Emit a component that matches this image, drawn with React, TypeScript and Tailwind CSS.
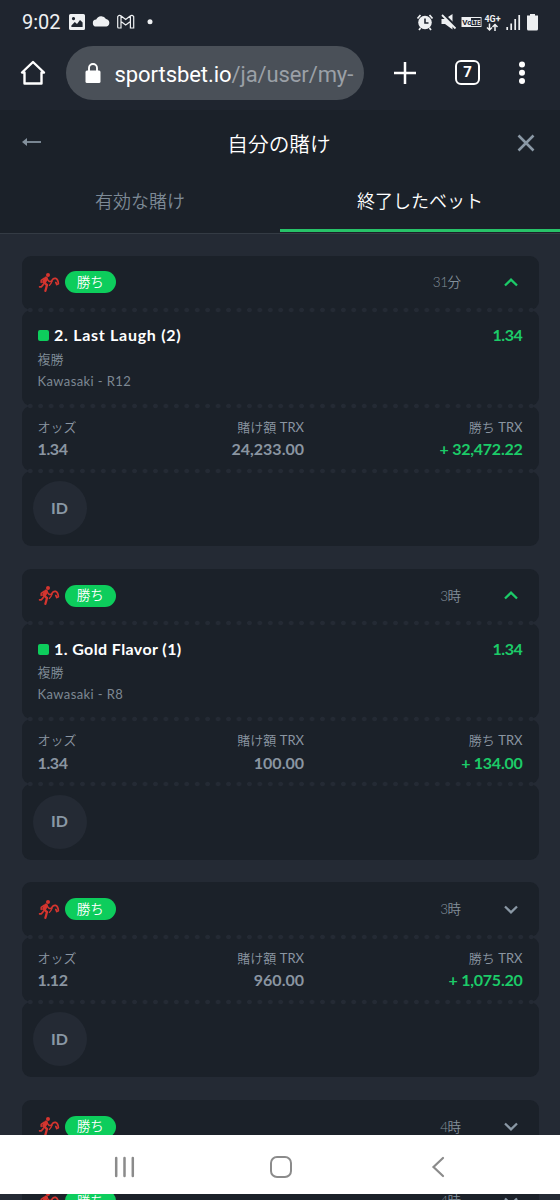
import clsx from "clsx";

type Bet = {
  time: string;
  open?: boolean;
  selection?: { name: string; market: string; event: string; price: string };
  odds?: string;
  stake?: string;
  win?: string;
};

const bets: Bet[] = [
  {
    time: "31分",
    open: true,
    selection: {
      name: "2. Last Laugh (2)",
      market: "複勝",
      event: "Kawasaki - R12",
      price: "1.34",
    },
    odds: "1.34",
    stake: "24,233.00",
    win: "+ 32,472.22",
  },
  {
    time: "3時",
    open: true,
    selection: {
      name: "1. Gold Flavor (1)",
      market: "複勝",
      event: "Kawasaki - R8",
      price: "1.34",
    },
    odds: "1.34",
    stake: "100.00",
    win: "+ 134.00",
  },
  { time: "3時", odds: "1.12", stake: "960.00", win: "+ 1,075.20" },
  { time: "4時" },
];

const RacingIcon = () => (
  <svg
    width="22"
    height="22"
    viewBox="0 0 22 22"
    fill="none"
    stroke="#d5352f"
    strokeLinecap="round"
    strokeLinejoin="round"
  >
    <circle cx="10" cy="3" r="2" fill="#d5352f" stroke="none" />
    <path d="M8 6.600 6.200 10" strokeWidth="4" />
    <path d="M6.600 11.200 9 13l-.8 3-.8 2.800" strokeWidth="2.300" />
    <path d="M6 6.400 3.200 8.400v2M9.400 7.400l1.800 2 2.600-.2" strokeWidth="1.500" />
    <path d="M1.600 14.800h1.800l1.800-2.200" strokeWidth="1.700" />
    <path d="M13.400 10.200c.4-2.600 2.200-4.200 4.200-3.800 1.800.6 2.600 2.800 2.800 5.400l-1.600.8-1-2.200" strokeWidth="1.700" />
    <path d="m13.200 11.200-1.800 2.200" strokeWidth="1.300" />
  </svg>
);

const Chevron = ({ open }: { open?: boolean }) => (
  <svg
    width="14"
    height="10"
    viewBox="0 0 14 10"
    fill="none"
    stroke={open ? "#1ccb68" : "#8a98a5"}
    strokeWidth="2.300"
  >
    <path d={open ? "M1 7.500 7 1.700 13 7.500" : "M1 1.500 7 7.300 13 1.500"} />
  </svg>
);

const Perforation = () => (
  <div className="relative z-10 -my-[3px] ml-[3px] mr-[3px] h-[6px] bg-[radial-gradient(circle,#242a34_1.9px,transparent_2.6px)] bg-size-[10.44px_6px]" />
);

const BetHeader = ({ time, open }: { time: string; open?: boolean }) => (
  <div className="flex h-[54.2px] items-center rounded-[9px] bg-[#1b2129] pr-[21px] pl-4">
    <RacingIcon />
    <span className="-mt-px ml-[5.5px] flex h-[22px] w-[50.5px] items-center justify-center rounded-full bg-[#0dcd5c] pt-px text-[13.5px] leading-none font-[350] text-white">
      勝ち
    </span>
    <span className="ml-auto text-[13.5px] font-[350] tracking-[-0.5px] text-[#83909b]">
      {time}
    </span>
    <span className="ml-[43px]">
      <Chevron open={open} />
    </span>
  </div>
);

const BetCard = ({ time, open, selection, odds, stake, win }: Bet) => (
  <article>
    <BetHeader time={time} open={open} />
    {selection && (
      <>
        <Perforation />
        <div className="h-[96px] rounded-[9px] bg-[#1b2129] px-4 pt-[14px]">
          <div className="flex h-[24px] items-center text-[16px] font-bold">
            <span className="mr-[5.5px] size-[11px] rounded-[2px] bg-[#0dcd5c]" />
            <span
              className={clsx(
                "-mt-px text-white",
                selection.name.startsWith("2") ? "tracking-[0.72px]" : "tracking-[0.4px]",
              )}
            >
              {selection.name}
            </span>
            <span className="-mt-px ml-auto tracking-[-0.4px] text-[#1ccb68]">{selection.price}</span>
          </div>
          <div className="text-[13px] leading-[22px] text-[#7d8893]">
            <p className="font-[350] text-[#83909b]">{selection.market}</p>
            <p className="tracking-[0.4px]">{selection.event}</p>
          </div>
        </div>
      </>
    )}
    {odds && (
      <>
        <Perforation />
        <div className="grid h-[65.3px] grid-cols-[89px_177.5px_1fr] rounded-[9px] bg-[#1b2129] px-4 pt-[11px] text-[13px] leading-[21.6px] text-[#8a95a1]">
          <div>
            <p className="font-[350]">オッズ</p>
            <p className="text-[16px] font-bold tracking-[-0.4px]">{odds}</p>
          </div>
          <div className="text-right">
            <p className="font-[350]">
              賭け額 <span className="font-normal">TRX</span>
            </p>
            <p className="text-[16px] font-bold">{stake}</p>
          </div>
          <div className="text-right">
            <p className="font-[350]">
              勝ち <span className="font-normal">TRX</span>
            </p>
            <p className="text-[16px] font-bold tracking-[-0.25px] text-[#1ccb68]">{win}</p>
          </div>
        </div>
      </>
    )}
    <Perforation />
    <div className="flex h-[75.5px] items-center rounded-[9px] bg-[#1b2129] pl-[11px]">
      <button className="-mt-px size-[54px] rounded-full bg-[#242a34] pb-px text-[16px] font-bold text-[#8a98a5]">
        ID
      </button>
    </div>
  </article>
);

const StatusBar = () => (
  <div className="flex h-[43px] items-center pl-[22px] font-[Roboto] text-[#eef0f2]">
    <span className="w-[46px] text-[20px]">9:02</span>
    <svg width="90" height="20" viewBox="68 11 90 20">
      <path
        d="M70.500 13h13q1.500 0 1.500 1.500v13q0 1.500-1.500 1.500h-13q-1.500 0-1.500-1.500v-13q0-1.500 1.500-1.500Zm.9 13h11.200V21.600l-2.600-2.600-3 4-2.200-2-3.400 3.400ZM73.500 16a1.600 1.600 0 1 0 .01 0Z"
        fill="currentColor"
        fillRule="evenodd"
      />
      <path d="M96.500 25.500a3.500 3.500 0 0 1-.3-7 5.500 5.500 0 0 1 9.800-.6 3.900 3.900 0 0 1 .5 7.600Z" fill="currentColor" />
      <path
        d="M118 27h3v-6.500l4.700 3.600 4.700-3.600V27h3.300V15.700q-1.500-2.200-3.500-.7l-4.500 3.500-4.500-3.500q-2-1.500-3.500.7V26q0 1 1 1ZM121 20.500V15M130.400 20.500V15"
        fill="none"
        stroke="currentColor"
        strokeWidth="1.200"
      />
      <circle cx="150" cy="20.700" r="2.500" fill="currentColor" />
    </svg>
    <svg className="ml-[256px]" width="130" height="24" viewBox="414 9 130 24" fill="none" stroke="currentColor">
      <circle cx="425" cy="21.500" r="6.800" fill="currentColor" stroke="none" />
      <path d="M417.500 17.500l3-3.500M432.500 17.500l-3-3.500M420.500 27l-1.500 2M429.500 27l1.500 2" strokeWidth="1.700" />
      <path d="M425 17.500v4.500h3.500" stroke="#1f252f" strokeWidth="1.600" />
      <path d="M441.500 18h3.500l7.500-5v15.500l-7.500-5.500h-3.500Z" fill="currentColor" stroke="none" />
      <path d="m442.500 12.500 14 14" stroke="#1f252f" strokeWidth="3" />
      <path d="m442 14 13.500 13.500" strokeWidth="1.800" />
      <rect x="461.500" y="16" width="20" height="10" fill="currentColor" stroke="none" />
      <rect x="471" y="17" width="9.700" height="8" fill="#1f252f" stroke="none" />
      <text x="462.300" y="24" fontSize="8" fontWeight="700" fill="#1f252f" stroke="none">Vo</text>
      <text x="471.400" y="23.600" fontSize="7" fontWeight="700" textLength="9" lengthAdjust="spacingAndGlyphs" fill="currentColor" stroke="none">LTE</text>
      <text x="484.500" y="20.500" fontSize="9" fontWeight="700" textLength="16" lengthAdjust="spacingAndGlyphs" fill="currentColor" stroke="none">4G+</text>
      <path d="M489.500 22.500v6.500m-2.500-2.500 2.500 2.500 2.500-2.500M495 30v-6.500m-2.500 2.500 2.500-2.500 2.500 2.500" strokeWidth="1.500" />
      <path d="M507.200 29v-3M511.200 29v-6.500M515.200 29V18M519.200 29V14" strokeWidth="1.700" />
      <path d="M530 13h5v1.500h3V28q0 1.500-1.500 1.500h-8q-1.500 0-1.500-1.500V14.500h3Z" fill="currentColor" stroke="none" />
    </svg>
  </div>
);

const BrowserBar = () => (
  <div className="flex h-[67px] items-start pt-[3px] font-[Roboto] text-white">
    <svg className="mt-[12px] ml-[18px]" width="30" height="30" viewBox="0 0 30 30" fill="none" stroke="currentColor" strokeWidth="2.400" strokeLinejoin="round" strokeLinecap="round">
      <path d="M15 4 4 14.500h2.500V25.500h17V14.500H26Z" />
    </svg>
    <div className="ml-[17.500px] flex h-[54px] w-[298.500px] items-center overflow-hidden rounded-full bg-[#4a5058] pl-[19px]">
      <svg width="16" height="21" viewBox="0 0 16 21">
        <rect x="0.500" y="7.500" width="15" height="12.500" rx="1.500" fill="currentColor" />
        <path d="M4 8V5a4 4 0 0 1 8 0v3" fill="none" stroke="currentColor" strokeWidth="1.900" />
      </svg>
      <span className="mt-[3px] ml-[14px] text-[22px] tracking-[-0.06px] whitespace-nowrap">
        sportsbet.io<span className="tracking-[-0.1px] text-[#9ba0a7]">/ja/user/my-</span>
      </span>
    </div>
    <svg className="mt-[16px] ml-[30px]" width="22" height="22" viewBox="0 0 22 22" stroke="currentColor" strokeWidth="2.500">
      <path d="M11 0v22M0 11h22" />
    </svg>
    <span className="mt-[14px] ml-[39px] flex size-[25px] items-center justify-center rounded-[6px] border-[2.400px] border-white text-[15px] font-bold">
      7
    </span>
    <svg className="mt-[14px] ml-[38px]" width="8" height="26" viewBox="0 0 8 26" fill="currentColor">
      <circle cx="4" cy="4.500" r="3" />
      <circle cx="4" cy="12.800" r="3" />
      <circle cx="4" cy="21" r="3" />
    </svg>
  </div>
);

const PageHeader = () => (
  <header className="h-[124px] border-b border-[#343b44] bg-[#1b2129]">
    <div className="flex h-[67px] items-center justify-between pr-[25px] pl-[22px]">
      <svg width="20" height="12" viewBox="0 0 20 12" className="-mt-[3px] text-[#84919d]">
        <path d="M0 6 5 2v8Z" fill="currentColor" />
        <path d="M3 6h16" stroke="currentColor" strokeWidth="1.800" />
      </svg>
      <h1 className="mt-[2px] mr-px text-[20.700px] font-[350] text-white">自分の賭け</h1>
      <svg width="18" height="18" viewBox="0 0 18 18" className="-mt-[2px]" stroke="#8a98a5" strokeWidth="2.600">
        <path d="m1.500 1.500 15 15M16.500 1.500l-15 15" />
      </svg>
    </div>
    <nav className="grid h-[56px] grid-cols-2 text-center text-[18px] font-[350]">
      <a className="pt-[11px] text-[#7d8a96]">有効な賭け</a>
      <a className="h-[55px] border-b-[3px] border-[#27c268] pt-[11px] text-white">終了したベット</a>
    </nav>
  </header>
);

const NavigationBar = () => (
  <div className="flex h-[59px] items-center bg-white pt-[5px] pl-[114px]">
    <svg width="21" height="22" viewBox="0 0 21 22" stroke="#8b8b8b" strokeWidth="2.500" strokeLinecap="round">
      <path d="M2.200 2v18M10.500 2v18M18.800 2v18" />
    </svg>
    <span className="ml-[135px] size-[22px] rounded-[7px] border-2 border-[#8b8b8b]" />
    <svg className="ml-[138px]" width="16" height="22" viewBox="0 0 16 22" fill="none" stroke="#8b8b8b" strokeWidth="2.200" strokeLinecap="round">
      <path d="M13 2 3.500 11 13 20" />
    </svg>
  </div>
);

export default function App() {
  return (
    <div className="h-[1200px] w-[560px] overflow-hidden bg-[#242a34] font-[Lato,'Noto_Sans_CJK_JP',sans-serif]">
      <div className="bg-[#1f252f]">
        <StatusBar />
        <BrowserBar />
      </div>
      <PageHeader />
      <main className="flex h-[901px] flex-col gap-[22.500px] overflow-hidden px-[21.500px] pt-[21.500px] *:shrink-0">
        {bets.map((bet, index) => (
          <BetCard key={index} {...bet} />
        ))}
      </main>
      <NavigationBar />
      {/* page content still shows under the system navigation bar */}
      <div className="h-[6px] overflow-hidden px-[21.500px]">
        <div className="-mt-[19.500px]">
          <BetHeader time="4時" />
        </div>
      </div>
    </div>
  );
}
